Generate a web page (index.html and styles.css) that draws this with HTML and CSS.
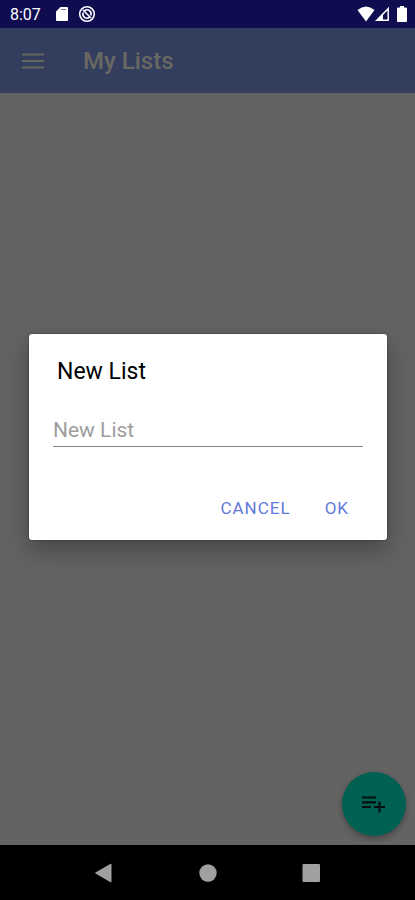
FILE: index.html
```html
<!DOCTYPE html>
<html lang="en">
<head>
<meta charset="utf-8">
<meta name="viewport" content="width=device-width, initial-scale=1">
<title>My Lists</title>
<link rel="stylesheet" href="styles.css">
</head>
<body>
<div class="status-bar">
  <span class="clock">8:07</span>
  <svg class="sd-icon" width="12" height="16" viewBox="0 0 12 16" aria-hidden="true">
    <path fill="#fff" d="M4.500 1H11q1 0 1 1v12q0 1-1 1H1q-1 0-1-1V5.500z"/>
    <path stroke="#77779f" stroke-width="1" d="M5 3.500h5"/>
  </svg>
  <svg class="sync-icon" width="18" height="18" viewBox="0 0 18 18" fill="none" stroke="#fff" aria-hidden="true">
    <circle cx="9" cy="9" r="7.300" stroke-width="1.600"/>
    <path stroke-width="1.600" d="M6.500 5.800A4 4 0 0 1 12.700 10.500M11.500 12.200A4 4 0 0 1 5.300 7.500M5 5l8 8"/>
  </svg>
  <span class="status-right">
    <svg width="18" height="16" viewBox="0 0 18 16" aria-hidden="true"><path fill="#fff" d="M.5 4Q9-3 17.500 4L9 15.500z"/></svg>
    <svg width="15" height="16" viewBox="0 0 15 16" aria-hidden="true"><path fill="none" stroke="#fff" stroke-width="1.500" d="M1.800 14.200L13.200 2.600V14.200z"/><path fill="#fff" d="M1 15L8 8v7z"/></svg>
    <svg class="battery" width="10" height="16" viewBox="0 0 10 16" aria-hidden="true"><path fill="#fff" d="M3 0h4v1.500h2q1 0 1 1V15q0 1-1 1H1q-1 0-1-1V2.500q0-1 1-1h2z"/></svg>
  </span>
</div>
<div class="screen">
  <div class="page">
    <header class="app-bar">
      <button class="menu" type="button" aria-label="Menu">
        <svg width="22" height="16" viewBox="0 0 22 16" aria-hidden="true"><path stroke="#66675f" stroke-width="2" d="M0 1.500h22M0 8h22M0 14.500h22"/></svg>
      </button>
      <h1>My Lists</h1>
    </header>
    <main class="content">
      <button class="fab" type="button" aria-label="Add list">
        <svg width="24" height="18" viewBox="0 0 24 18" aria-hidden="true"><path fill="none" stroke="#03100e" stroke-width="2.200" d="M0 2.500h14M0 7.300h14M0 12h9M17.500 6.500v11M12 12h11"/></svg>
      </button>
    </main>
  </div>
  <form class="dialog" role="dialog" aria-labelledby="dialog-title">
    <h2 id="dialog-title"><label for="list-name">New List</label></h2>
    <input id="list-name" type="text" placeholder="New List">
    <div class="actions">
      <button type="button">CANCEL</button>
      <button type="button">OK</button>
    </div>
  </form>
</div>
<nav class="nav-bar">
  <button type="button" aria-label="Back"><svg width="20" height="20" viewBox="0 0 20 20" aria-hidden="true"><path fill="#a0a0a0" stroke="#a0a0a0" stroke-linejoin="round" d="M1.500 10L17 1v18z"/></svg></button>
  <button type="button" aria-label="Home"><svg width="20" height="20" viewBox="0 0 20 20" aria-hidden="true"><circle cx="10" cy="10" r="8.700" fill="#a0a0a0"/></svg></button>
  <button type="button" aria-label="Recent apps"><svg width="20" height="20" viewBox="0 0 20 20" aria-hidden="true"><rect x="1.500" y="1" width="17.500" height="18" rx="1" fill="#a0a0a0"/></svg></button>
</nav>
</body>
</html>
```
FILE: styles.css
```css
* {
  box-sizing: border-box;
}

body {
  margin: 0;
  min-height: 100vh;
  display: flex;
  flex-direction: column;
  font-family: Roboto, "Liberation Sans", sans-serif;
  background: #636363;
}

button {
  padding: 0;
  border: 0;
  background: none;
  font: inherit;
}

svg {
  display: block;
}

h1,
h2 {
  margin: 0;
  line-height: 28px;
}

h1 {
  font-size: 24px;
  font-weight: 500;
}

.status-bar {
  height: 28px;
  padding: 0 8px 0 10px;
  display: flex;
  align-items: center;
  background: #100c50;
  color: #fff;
}

.clock {
  font-size: 16px;
  line-height: 20px;
  padding-top: 2px;
}

.sd-icon {
  margin-left: 15px;
}

.sync-icon {
  margin-left: 10px;
}

.status-right {
  margin-left: auto;
  display: flex;
  align-items: center;
}

.battery {
  margin-left: 7px;
}

.screen {
  flex: 1;
  display: grid;
}

.page,
.dialog {
  grid-area: 1 / 1;
}

.page {
  display: flex;
  flex-direction: column;
}

.app-bar {
  height: 65px;
  padding: 0 22px;
  display: flex;
  align-items: center;
  gap: 39px;
  background: #333d5e;
  color: #686963;
}

.content {
  flex: 1;
  display: flex;
  justify-content: flex-end;
  align-items: flex-end;
  padding: 9px;
}

.fab {
  width: 64px;
  height: 64px;
  display: grid;
  place-items: center;
  border-radius: 50%;
  background: #006153;
  box-shadow: 0 3px 6px rgba(0, 0, 0, 0.3);
}

.dialog {
  z-index: 1;
  align-self: center;
  margin: 0 28px 0 29px;
  padding: 24px;
  padding-bottom: 12px;
  border-radius: 3px;
  background: #fff;
  box-shadow: 0 0 2px rgba(0, 0, 0, 0.5), 0 10px 24px rgba(0, 0, 0, 0.3);
}

.dialog h2 {
  padding-left: 4px;
  font-size: 23px;
  font-weight: 400;
  color: #000;
}

.dialog input {
  display: block;
  width: 100%;
  height: 33px;
  margin-top: 28px;
  padding: 0;
  border: 0;
  border-bottom: 1px solid #858585;
  border-radius: 0;
  outline: 0;
  background: none;
  font: 400 21px/28px Roboto, "Liberation Sans", sans-serif;
  color: #000;
}

.dialog input::placeholder {
  color: #9d9d9d;
  opacity: 1;
}

.actions {
  display: flex;
  justify-content: flex-end;
  gap: 10px;
  margin-top: 41px;
  padding-right: 2px;
}

.actions button {
  height: 40px;
  padding: 0 12px;
  font-size: 17px;
  font-weight: 400;
  letter-spacing: 1px;
  color: #6478dc;
}

.nav-bar {
  height: 55px;
  padding: 0 12.5%;
  display: grid;
  grid-template-columns: repeat(3, 1fr);
  place-items: center;
  background: #000;
}
```
